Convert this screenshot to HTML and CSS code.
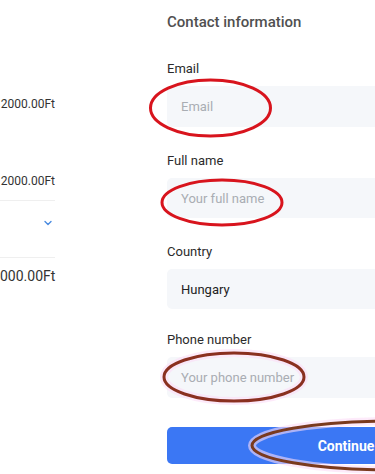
FILE: index.html
```html
<!DOCTYPE html>
<html lang="en">
<head>
<meta charset="utf-8">
<title>Checkout</title>
<link rel="stylesheet" href="styles.css">
</head>
<body>
<div class="page">
  <aside class="summary">
    <div class="sum-row sum-row--first">2000.00Ft</div>
    <div class="sum-row sum-row--second">2000.00Ft</div>
    <div class="sum-toggle">
      <svg class="chev" width="8" height="6" viewBox="0 0 8 6"><path d="M1 1.5 L4 4.5 L7 1.5" fill="none" stroke="#4a8be0" stroke-width="1.4" stroke-linecap="round" stroke-linejoin="round"/></svg>
    </div>
    <div class="sum-row sum-row--total">000.00Ft</div>
  </aside>
  <main class="contact">
    <h2 class="contact-title">Contact information</h2>
    <div class="field">
      <label class="field-label">Email</label>
      <div class="input input--tall"><span class="placeholder">Email</span></div>
    </div>
    <div class="field">
      <label class="field-label">Full name</label>
      <div class="input"><span class="placeholder">Your full name</span></div>
    </div>
    <div class="field field--select">
      <label class="field-label">Country</label>
      <div class="input"><span class="value">Hungary</span></div>
    </div>
    <div class="field field--last">
      <label class="field-label">Phone number</label>
      <div class="input input--tall"><span class="placeholder">Your phone number</span></div>
    </div>
    <button class="btn">Continue</button>
  </main>
</div>
<svg class="marks" width="375" height="474" viewBox="0 0 375 474">
  <ellipse cx="210.5" cy="108" rx="60" ry="28" fill="none" stroke="#d8141d" stroke-width="3"/>
  <ellipse cx="222" cy="202.5" rx="60" ry="22.5" fill="none" stroke="#d8141d" stroke-width="3"/>
  <ellipse cx="234" cy="377" rx="70" ry="24" fill="none" stroke="#fbdcf7" stroke-width="8" opacity="0.6"/>
  <ellipse cx="234" cy="377" rx="70" ry="24" fill="none" stroke="#8a3020" stroke-width="3"/>
  <ellipse cx="392" cy="445.5" rx="140" ry="24.5" fill="none" stroke="#fbdcf7" stroke-width="8" opacity="0.6"/>
  <ellipse cx="392" cy="445.5" rx="140" ry="24.5" fill="none" stroke="#7a3a1e" stroke-width="3"/>
</svg>
</body>
</html>
```

FILE: styles.css
```css
html, body {
  margin: 0;
  padding: 0;
  background: #ffffff;
  overflow: hidden;
}
body {
  width: 375px;
  height: 474px;
  position: relative;
  font-family: Roboto, "Liberation Sans", Arial, sans-serif;
}
.page {
  display: flex;
  align-items: flex-start;
  gap: 112px;
}
.summary {
  width: 55px;
  flex: none;
  padding-top: 96px;
  color: #333333;
}
.sum-row {
  height: 16px;
  line-height: 16px;
  text-align: right;
  white-space: nowrap;
  font-size: 12px;
}
.sum-row--second {
  margin-top: 61px;
}
.sum-row--total {
  font-size: 14px;
  margin-top: 10px;
}
.sum-toggle {
  margin-top: 11px;
  height: 58px;
  border-top: 1px solid #efefef;
  border-bottom: 1px solid #efefef;
  display: flex;
  justify-content: flex-end;
  align-items: flex-start;
  padding-top: 19px;
  box-sizing: border-box;
}
.chev {
  display: block;
  margin-right: 3px;
}
.contact {
  width: 370px;
  flex: none;
  padding-top: 12px;
}
.contact-title {
  margin: 0 0 28px;
  font-size: 15px;
  line-height: 20px;
  font-weight: 500;
  color: #505050;
}
.field {
  margin-bottom: 25px;
}
.field--select {
  margin-bottom: 22px;
}
.field--last {
  margin-bottom: 29px;
}
.field-label {
  display: block;
  font-size: 13px;
  line-height: 18px;
  color: #2b2b2b;
  margin-bottom: 8px;
}
.input {
  height: 40px;
  background: #f5f7fa;
  border-radius: 5px;
  display: flex;
  align-items: center;
  padding-left: 14px;
  font-size: 13px;
}
.input--tall {
  height: 41px;
}
.placeholder {
  color: #a9adb3;
}
.value {
  color: #222222;
}
.btn {
  display: block;
  width: 358px;
  height: 37px;
  border: none;
  border-radius: 5px;
  background: #3b77f4;
  color: #ffffff;
  font-family: Roboto, "Liberation Sans", Arial, sans-serif;
  font-size: 14px;
  font-weight: 700;
  padding: 0;
}
.marks {
  position: absolute;
  left: 0;
  top: 0;
  pointer-events: none;
}
```
